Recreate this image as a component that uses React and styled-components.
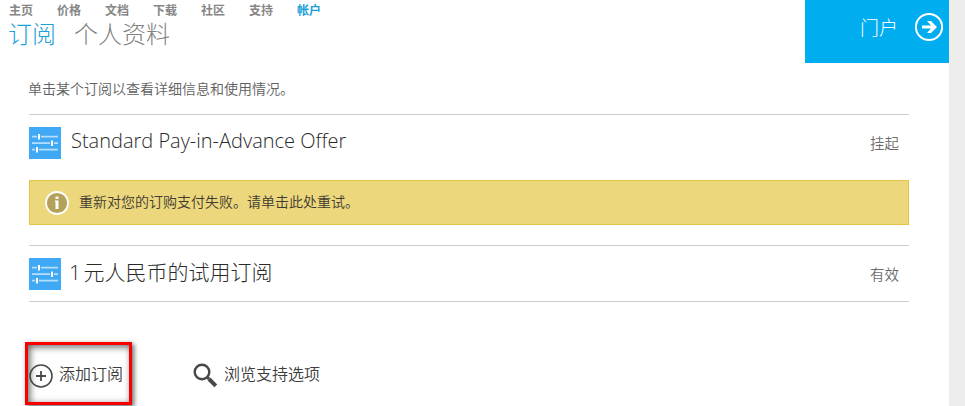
import React from 'react';
import styled, { createGlobalStyle } from 'styled-components';

const GlobalStyle = createGlobalStyle`
  * { box-sizing: border-box; }
  body {
    margin: 0;
    overflow: hidden;
    background: #ededed;
    font-family: "Open Sans", "Noto Sans CJK SC", sans-serif;
  }
  svg { display: block; flex: none; }
`;

const Page = styled.div`
  width: 949px;
  height: 406px;
  background: #fff;
  overflow: hidden;
`;

const Header = styled.header`
  display: flex;
  justify-content: space-between;
  height: 63px;
`;

const Nav = styled.nav`
  display: flex;
  gap: 24px;
  height: 19px;
  padding-left: 9px;
`;

const NavLink = styled.a`
  font: 700 12px/19px "Noto Sans CJK SC", sans-serif;
  white-space: nowrap;
  color: ${({ $active }) => ($active ? '#1ba1d8' : '#868686')};
`;

const Tabs = styled.div`
  display: flex;
  gap: 18px;
  padding-left: 8px;
`;

const Tab = styled.a`
  font: 300 24px/28px "Noto Sans CJK SC", sans-serif;
  white-space: nowrap;
  color: ${({ $active }) => ($active ? '#1ba1d8' : '#808080')};
`;

const Portal = styled.a`
  display: flex;
  align-items: center;
  justify-content: flex-end;
  gap: 16px;
  width: 144px;
  height: 63px;
  padding: 0 5px 9px 0;
  background: #00adef;
  color: #fff;
  font: 300 19px/28px "Noto Sans CJK SC", sans-serif;
`;

const Content = styled.main`
  width: 880px;
  margin-left: 29px;
`;

const Intro = styled.p`
  height: 51px;
  margin: 0;
  padding-top: 15px;
  font: 350 14px/20px "Noto Sans CJK SC", sans-serif;
  color: #606060;
  text-indent: -1px;
`;

const Subscription = styled.section`
  display: flex;
  align-items: center;
  gap: 10px;
  height: ${({ $closed }) => ($closed ? 57 : 56)}px;
  border-top: 1px solid #cdcdcd;
  border-bottom: ${({ $closed }) => ($closed ? '1px solid #cdcdcd' : 'none')};
`;

const Name = styled.h2`
  flex: 1;
  margin: 0;
  padding-bottom: ${({ $latin }) => ($latin ? 3 : 4)}px;
  font-size: ${({ $latin }) => ($latin ? 20 : 21)}px;
  line-height: 30px;
  font-weight: 300;
  word-spacing: ${({ $latin }) => ($latin ? 0 : -3)}px;
  text-indent: ${({ $latin }) => ($latin ? 0 : -2)}px;
  color: #2b2b2b;
`;

const Status = styled.span`
  padding-right: 10px;
  font: 350 14.5px/20px "Noto Sans CJK SC", sans-serif;
  color: #6b6b6b;
`;

const Alert = styled.div`
  display: flex;
  align-items: center;
  gap: 10px;
  height: 45px;
  margin: 10px 0 20px;
  padding-left: 15px;
  border: 1px solid #e3c443;
  background: #ecd77d;
  font: 350 14px/20px "Noto Sans CJK SC", sans-serif;
  color: #3e3b32;
`;

const AlertText = styled.span`
  padding-bottom: 3px;
`;

const Actions = styled.div`
  display: flex;
  gap: 61px;
  margin: 40px 0 0 -4px;
`;

const Action = styled.a`
  display: flex;
  align-items: center;
  gap: ${({ $gap }) => $gap}px;
  height: 63px;
  padding-top: 4px;
  font: 350 16px/24px "Noto Sans CJK SC", sans-serif;
  color: #3c3c3c;
`;

const ActionText = styled.span`
  padding-bottom: 5px;
`;

const HighlightedAction = styled(Action)`
  width: 107px;
  padding: 4px 0 0 1px;
  border: 3px solid #f90000;
  box-shadow: 2px 2px 5px rgba(0, 0, 0, 0.6), inset 2px 2px 7px rgba(0, 0, 0, 0.6);
`;

const SettingsIcon = () => (
  <svg width="32" height="32" viewBox="0 0 32 32">
    <path fill="#3fa9f5" d="M0 0h32v32H0z" />
    <path d="M3 9.7h26M3 16.2h26M3 22.7h26" stroke="#b6defc" strokeWidth="1.7" />
    <path d="M10 7v5.5M23 13.5V19M8 20v5.5" stroke="#3fa9f5" strokeWidth="4" />
    <path d="M10 7v5.5M23 13.5V19M8 20v5.5" stroke="#fff" strokeWidth="2" />
  </svg>
);

const ArrowIcon = () => (
  <svg width="30" height="30" viewBox="0 0 30 30">
    <circle cx="15" cy="15" r="13.1" fill="none" stroke="#fff" strokeWidth="2" />
    <path d="M8 13.5h9L13 9h4l6 6-6 6h-4l4-4.5H8z" fill="#fff" />
  </svg>
);

const InfoIcon = () => (
  <svg width="24" height="24" viewBox="0 0 24 24">
    <circle cx="12" cy="12" r="11" fill="#b4a25b" stroke="#fff" strokeWidth="1.8" />
    <path d="M10.5 5.5h3V8h-3zM10 9.5h3.5V18h-3v-7H10z" fill="#fff" />
  </svg>
);

const AddIcon = () => (
  <svg width="24" height="24" viewBox="0 0 24 24" fill="none" stroke="#4a4a4a">
    <circle cx="12" cy="12" r="11" strokeWidth="1.6" />
    <path d="M7 12h10M12 7v10" strokeWidth="1.8" />
  </svg>
);

const SearchIcon = () => (
  <svg width="25" height="25" viewBox="0 0 25 25" fill="none" stroke="#484848">
    <circle cx="9" cy="9" r="7.3" strokeWidth="2.4" />
    <path d="M14 14l2 2" strokeWidth="3" />
    <path d="M16 16l6.8 6.8" strokeWidth="4" />
  </svg>
);

const links = ['主页', '价格', '文档', '下载', '社区', '支持', '帐户'];

export default function App() {
  return (
    <>
      <GlobalStyle />
      <Page>
        <Header>
          <div>
            <Nav>
              {links.map((label) => (
                <NavLink key={label} $active={label === '帐户'}>{label}</NavLink>
              ))}
            </Nav>
            <Tabs>
              <Tab $active>订阅</Tab>
              <Tab>个人资料</Tab>
            </Tabs>
          </div>
          <Portal>门户<ArrowIcon /></Portal>
        </Header>
        <Content>
          <Intro>单击某个订阅以查看详细信息和使用情况。</Intro>
          <Subscription>
            <SettingsIcon />
            <Name $latin>Standard Pay-in-Advance Offer</Name>
            <Status>挂起</Status>
          </Subscription>
          <Alert>
            <InfoIcon />
            <AlertText>重新对您的订购支付失败。请单击此处重试。</AlertText>
          </Alert>
          <Subscription $closed>
            <SettingsIcon />
            <Name>1 元人民币的试用订阅</Name>
            <Status>有效</Status>
          </Subscription>
          <Actions>
            <HighlightedAction $gap={6}>
              <AddIcon />
              <ActionText>添加订阅</ActionText>
            </HighlightedAction>
            <Action $gap={6}>
              <SearchIcon />
              <ActionText>浏览支持选项</ActionText>
            </Action>
          </Actions>
        </Content>
      </Page>
    </>
  );
}
